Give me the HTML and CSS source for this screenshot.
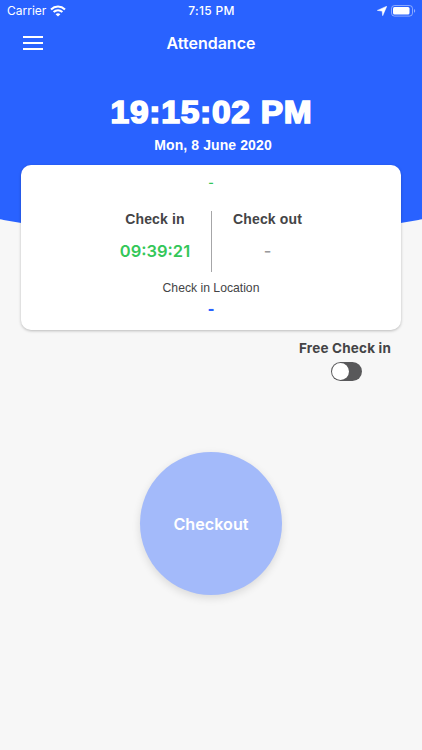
FILE: index.html
```html
<!DOCTYPE html>
<html lang="en">
<head>
  <meta charset="UTF-8" />
  <meta name="viewport" content="width=device-width, initial-scale=1.0"/>
  <title>Attendance</title>
  <link rel="stylesheet" href="styles.css">
</head>
<body>
  <div class="screen">
    <div class="status-bar">
      <div class="carrier">
        <span>Carrier</span>
        <svg class="wifi" width="16" height="12" viewBox="0 0 16 12" fill="none" stroke="#fff" stroke-width="2.1">
          <path d="M1 4.4C5 .6 11 .6 15 4.4" />
          <path d="M3.6 7.1c2.6-2.4 6.2-2.4 8.8 0" />
          <path d="M8 11.6L5.6 9.2c1.4-1.2 3.4-1.2 4.8 0z" fill="#fff" stroke="none" />
        </svg>
      </div>
      <span class="status-time">7:15 PM</span>
      <div class="indicators">
        <svg class="location" width="10" height="10" viewBox="0 0 10 10" fill="#fff">
          <path d="M9.8.2L5.7 9.7 5.1 5.1.3 4.4z" stroke="#fff" stroke-width=".5" />
        </svg>
        <svg class="battery" width="25" height="12" viewBox="0 0 25 12">
          <rect x=".5" y=".5" width="21" height="10.6" rx="3" fill="none" stroke="#fff" stroke-opacity=".45" />
          <rect x="2" y="2" width="16.5" height="7.6" rx="1.5" fill="#fff" />
          <path d="M23 4v3.8c1.6-.6 1.6-3.2 0-3.8z" fill="#fff" fill-opacity=".5" />
        </svg>
      </div>
    </div>

    <div class="nav">
      <div class="menu" id="menu">
        <span></span>
        <span></span>
        <span></span>
      </div>
      <h1>Attendance</h1>
    </div>

    <div class="clock">19:15:02 PM</div>
    <div class="date">Mon, 8 June 2020</div>

    <div class="card">
      <div class="shift">-</div>
      <div class="times">
        <div class="time">
          <h2>Check in</h2>
          <p class="time-in">09:39:21</p>
        </div>
        <div class="time">
          <h2>Check out</h2>
          <p class="time-out">-</p>
        </div>
      </div>
      <div class="location-label">Check in Location</div>
      <div class="location-value">-</div>
    </div>

    <div class="free">
      <span class="free-label">Free Check in</span>
      <div class="switch"></div>
    </div>

    <button class="checkout">Checkout</button>
  </div>
</body>
</html>
```

FILE: styles.css
```css
* {
  margin: 0;
  padding: 0;
  box-sizing: border-box;
}

body {
  background: #f7f7f7;
  font-family: Inter, 'Liberation Sans', sans-serif;
  color: #444446;
}

.screen {
  position: relative;
  height: 750px;
  overflow: hidden;
}

/* blue header with the curved bottom */
.screen::before {
  content: '';
  position: absolute;
  z-index: -1;
  top: 0;
  left: 0;
  width: 100%;
  height: 238px;
  background: #2962ff;
  clip-path: ellipse(542px 238px at 50% 0);
}

.status-bar {
  display: grid;
  grid-template-columns: 1fr auto 1fr;
  align-items: center;
  height: 21px;
  padding: 0 6px 0 7px;
  color: #fff;
  font-size: 12px;
}

.carrier {
  display: flex;
  align-items: center;
  gap: 4px;
}

.status-time {
  font-weight: 500;
  letter-spacing: 0.3px;
}

.indicators {
  display: flex;
  align-items: center;
  justify-content: flex-end;
  gap: 4px;
}

.nav {
  display: grid;
  grid-template-columns: 1fr auto 1fr;
  align-items: center;
  height: 44px;
  padding: 0 23px;
}

.menu {
  display: flex;
  flex-direction: column;
  gap: 4px;
  width: 20px;
}

.menu span {
  height: 2px;
  background: #fff;
}

h1 {
  color: #fff;
  font-size: 16px;
  font-weight: 600;
}

.clock {
  margin-top: 30px;
  padding-left: 1px;
  color: #fff;
  font-family: 'Liberation Sans', Arial, sans-serif;
  font-size: 31px;
  font-weight: bold;
  line-height: 36px;
  letter-spacing: 0.7px;
  text-align: center;
  transform: scaleX(1.08);
  -webkit-text-stroke: 1.6px #fff;
}

.date {
  margin-top: 5px;
  padding-left: 4px;
  color: #fff;
  font-family: 'Liberation Sans', Arial, sans-serif;
  font-size: 14px;
  font-weight: bold;
  line-height: 18px;
  letter-spacing: 0.1px;
  text-align: center;
}

.card {
  height: 165px;
  margin: 11px 21px 0;
  padding-top: 9px;
  background: #fff;
  border-radius: 10px;
  box-shadow: 0 1px 3px rgba(0, 0, 0, 0.25);
  text-align: center;
}

.shift {
  color: #34c759;
  font-size: 12px;
  font-weight: 600;
  line-height: 18px;
}

.times {
  display: flex;
  justify-content: center;
  margin-top: 19px;
}

.time {
  width: 112px;
  height: 61px;
}

.time + .time {
  border-left: 1px solid #a6a6a8;
}

h2 {
  font-family: 'Liberation Sans', Arial, sans-serif;
  font-size: 14px;
  line-height: 16px;
  letter-spacing: 0.15px;
}

.time p {
  margin-top: 14px;
  font-size: 16.5px;
  line-height: 20px;
}

.time .time-in {
  color: #34c759;
  font-weight: 600;
}

.time .time-out {
  color: #9a9a9c;
  font-weight: 500;
}

.location-label {
  margin-top: 8px;
  font-family: 'Liberation Sans', Arial, sans-serif;
  font-size: 12.2px;
  line-height: 16px;
}

.location-value {
  margin-top: 4px;
  color: #2962ff;
  font-size: 14px;
  font-weight: 900;
  line-height: 18px;
}

.free {
  display: flex;
  flex-direction: column;
  align-items: center;
  width: 96px;
  margin: 9px 29px 0 auto;
}

.free-label {
  font-size: 13.5px;
  font-weight: 700;
  line-height: 18px;
  letter-spacing: 0.2px;
  white-space: nowrap;
}

.switch {
  width: 31px;
  height: 19px;
  margin: 5px 0 0 3px;
  padding: 1px;
  background: #58585a;
  border-radius: 10px;
}

.switch::before {
  content: '';
  display: block;
  width: 17px;
  height: 17px;
  background: #fff;
  border-radius: 50%;
}

.checkout {
  display: block;
  width: 142px;
  height: 143px;
  margin: 71px auto 0;
  background: #a3bafa;
  border: none;
  border-radius: 50%;
  box-shadow: 0 3px 8px rgba(0, 0, 0, 0.12);
  color: #fff;
  font-family: inherit;
  font-size: 16.2px;
  font-weight: 600;
}
```
